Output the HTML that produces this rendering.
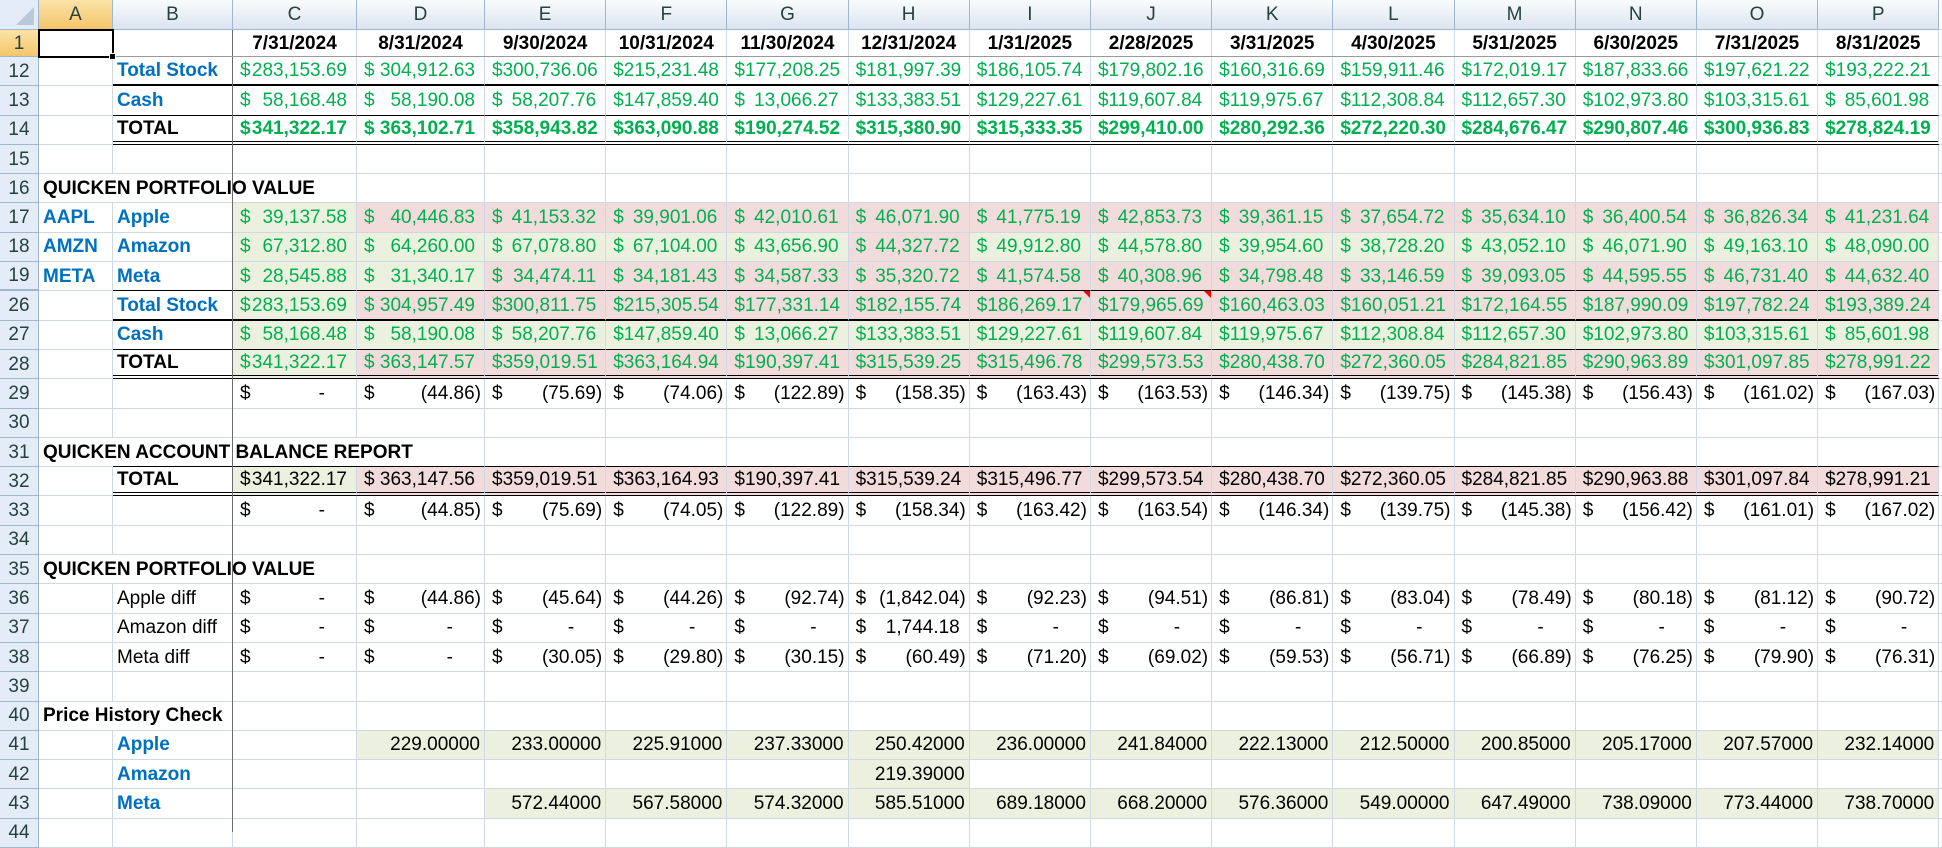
<!DOCTYPE html>
<html><head><meta charset="utf-8">
<style>
*{margin:0;padding:0;box-sizing:border-box}
body{width:1942px;height:832px;overflow:hidden;background:#fff;font-family:"Liberation Sans",Arial,sans-serif;font-size:19px;color:#000;position:relative}
.g0{display:grid;grid-template-columns:39px 74px 120px 124px 128px repeat(12,121.2px) 3px;grid-template-rows:30px 27px repeat(27,29.3px);width:1942px}
.g0>div{border-right:1px solid #d0d7e5;border-bottom:1px solid #d0d7e5;display:flex;align-items:center;white-space:nowrap;padding:0 4px;position:relative;line-height:1}
.g0>div.ch{background:linear-gradient(#f9fcfd,#dbe4f0);border-right:1px solid #9eb6ce;border-bottom:1px solid #9eb6ce;justify-content:center;color:#27413e;font-size:19px}
.g0>div.cs{background:linear-gradient(#fbe3a8,#f4c669);border-right:1px solid #9eb6ce;border-bottom:1px solid #9eb6ce;justify-content:center;color:#27413e}
.g0>div.h{background:#e4ecf7;border-right:1px solid #9eb6ce;border-bottom:1px solid #9eb6ce;justify-content:center;color:#27413e;padding:0}
.g0>div.hs{background:linear-gradient(#fbe3a8,#f4c669);border-right:1px solid #9eb6ce;border-bottom:1px solid #9eb6ce;justify-content:center;color:#27413e;padding:0}
.g0>div.h2{border-bottom:2px solid #9eb6ce}
.g0>div.m{justify-content:space-between;padding:0 3px 0 7px}
.g0>div.m span{padding-right:6px}
.g0>div.n span{padding-right:0}
.g0>div.d span{padding-right:28px}
.g0>div.r{justify-content:flex-end;padding-right:4px}
.g0>div.dt{justify-content:center;font-weight:bold}
.g{color:#00b050}.b{font-weight:bold}
.bl{color:#0070c0;font-weight:bold}
.fg{background:#ebf1de}.fp{background:#f2dcdb}
.g0>div.nr{border-right:none}
.g0>div.tk{border-bottom:2px solid #000}
.g0>div.tn{border-bottom:1px solid #000}
.g0>div.db{border-bottom:4px double #000}
.tri:after{content:"";position:absolute;right:0;top:0;border-top:7px solid #f00;border-left:7px solid transparent}
.vl{position:absolute;left:232px;top:30px;width:1px;height:802px;background:#6b6b6b}
.hl{position:absolute;left:39px;top:56px;width:1900px;height:1px;background:#9a9a9a}
.sel{position:absolute;left:38px;top:29px;width:76px;height:29px;border:2px solid #000}
.sel:after{content:"";position:absolute;right:-4px;bottom:-4px;width:5px;height:5px;background:#000;border:1px solid #fff}
.corner{position:absolute;left:0;top:0;width:39px;height:30px;background:#e4ecf7;border-right:1px solid #9eb6ce;border-bottom:1px solid #9eb6ce}
.corner:after{content:"";position:absolute;right:4px;bottom:4px;border-bottom:18px solid #b9c9da;border-left:18px solid transparent}
</style></head><body>
<div class="g0">
<div></div><div class="cs">A</div><div class="ch">B</div><div class="ch">C</div><div class="ch">D</div><div class="ch">E</div><div class="ch">F</div><div class="ch">G</div><div class="ch">H</div><div class="ch">I</div><div class="ch">J</div><div class="ch">K</div><div class="ch">L</div><div class="ch">M</div><div class="ch">N</div><div class="ch">O</div><div class="ch">P</div><div></div>

<div class="hs">1</div><div></div><div></div><div class="dt">7/31/2024</div><div class="dt">8/31/2024</div><div class="dt">9/30/2024</div><div class="dt">10/31/2024</div><div class="dt">11/30/2024</div><div class="dt">12/31/2024</div><div class="dt">1/31/2025</div><div class="dt">2/28/2025</div><div class="dt">3/31/2025</div><div class="dt">4/30/2025</div><div class="dt">5/31/2025</div><div class="dt">6/30/2025</div><div class="dt">7/31/2025</div><div class="dt">8/31/2025</div><div></div>

<div class="h">12</div><div></div><div class="bl tk">Total Stock</div><div class="m g tk">$<span>283,153.69</span></div><div class="m g tk">$<span>304,912.63</span></div><div class="m g tk">$<span>300,736.06</span></div><div class="m g tk">$<span>215,231.48</span></div><div class="m g tk">$<span>177,208.25</span></div><div class="m g tk">$<span>181,997.39</span></div><div class="m g tk">$<span>186,105.74</span></div><div class="m g tk">$<span>179,802.16</span></div><div class="m g tk">$<span>160,316.69</span></div><div class="m g tk">$<span>159,911.46</span></div><div class="m g tk">$<span>172,019.17</span></div><div class="m g tk">$<span>187,833.66</span></div><div class="m g tk">$<span>197,621.22</span></div><div class="m g tk">$<span>193,222.21</span></div><div></div>

<div class="h">13</div><div></div><div class="bl tn">Cash</div><div class="m g tn">$<span>58,168.48</span></div><div class="m g tn">$<span>58,190.08</span></div><div class="m g tn">$<span>58,207.76</span></div><div class="m g tn">$<span>147,859.40</span></div><div class="m g tn">$<span>13,066.27</span></div><div class="m g tn">$<span>133,383.51</span></div><div class="m g tn">$<span>129,227.61</span></div><div class="m g tn">$<span>119,607.84</span></div><div class="m g tn">$<span>119,975.67</span></div><div class="m g tn">$<span>112,308.84</span></div><div class="m g tn">$<span>112,657.30</span></div><div class="m g tn">$<span>102,973.80</span></div><div class="m g tn">$<span>103,315.61</span></div><div class="m g tn">$<span>85,601.98</span></div><div></div>

<div class="h">14</div><div></div><div class="b db">TOTAL</div><div class="m g b db">$<span>341,322.17</span></div><div class="m g b db">$<span>363,102.71</span></div><div class="m g b db">$<span>358,943.82</span></div><div class="m g b db">$<span>363,090.88</span></div><div class="m g b db">$<span>190,274.52</span></div><div class="m g b db">$<span>315,380.90</span></div><div class="m g b db">$<span>315,333.35</span></div><div class="m g b db">$<span>299,410.00</span></div><div class="m g b db">$<span>280,292.36</span></div><div class="m g b db">$<span>272,220.30</span></div><div class="m g b db">$<span>284,676.47</span></div><div class="m g b db">$<span>290,807.46</span></div><div class="m g b db">$<span>300,936.83</span></div><div class="m g b db">$<span>278,824.19</span></div><div></div>

<div class="h">15</div><div></div><div></div><div></div><div></div><div></div><div></div><div></div><div></div><div></div><div></div><div></div><div></div><div></div><div></div><div></div><div></div><div></div>

<div class="h">16</div><div class="b nr">QUICKEN PORTFOLIO VALUE</div><div class="nr"></div><div></div><div></div><div></div><div></div><div></div><div></div><div></div><div></div><div></div><div></div><div></div><div></div><div></div><div></div><div></div>

<div class="h">17</div><div class="bl">AAPL</div><div class="bl">Apple</div><div class="m g fg">$<span>39,137.58</span></div><div class="m g fp">$<span>40,446.83</span></div><div class="m g fp">$<span>41,153.32</span></div><div class="m g fp">$<span>39,901.06</span></div><div class="m g fp">$<span>42,010.61</span></div><div class="m g fp">$<span>46,071.90</span></div><div class="m g fp">$<span>41,775.19</span></div><div class="m g fp">$<span>42,853.73</span></div><div class="m g fp">$<span>39,361.15</span></div><div class="m g fp">$<span>37,654.72</span></div><div class="m g fp">$<span>35,634.10</span></div><div class="m g fp">$<span>36,400.54</span></div><div class="m g fp">$<span>36,826.34</span></div><div class="m g fp">$<span>41,231.64</span></div><div></div>

<div class="h">18</div><div class="bl">AMZN</div><div class="bl">Amazon</div><div class="m g fg">$<span>67,312.80</span></div><div class="m g fg">$<span>64,260.00</span></div><div class="m g fg">$<span>67,078.80</span></div><div class="m g fg">$<span>67,104.00</span></div><div class="m g fg">$<span>43,656.90</span></div><div class="m g fp">$<span>44,327.72</span></div><div class="m g fg">$<span>49,912.80</span></div><div class="m g fg">$<span>44,578.80</span></div><div class="m g fg">$<span>39,954.60</span></div><div class="m g fg">$<span>38,728.20</span></div><div class="m g fg">$<span>43,052.10</span></div><div class="m g fg">$<span>46,071.90</span></div><div class="m g fg">$<span>49,163.10</span></div><div class="m g fg">$<span>48,090.00</span></div><div></div>

<div class="h h2">19</div><div class="bl">META</div><div class="bl tn">Meta</div><div class="m g fg tn">$<span>28,545.88</span></div><div class="m g fg tn">$<span>31,340.17</span></div><div class="m g fp tn">$<span>34,474.11</span></div><div class="m g fp tn">$<span>34,181.43</span></div><div class="m g fp tn">$<span>34,587.33</span></div><div class="m g fp tn">$<span>35,320.72</span></div><div class="m g fp tn">$<span>41,574.58</span></div><div class="m g fp tn">$<span>40,308.96</span></div><div class="m g fp tn">$<span>34,798.48</span></div><div class="m g fp tn">$<span>33,146.59</span></div><div class="m g fp tn">$<span>39,093.05</span></div><div class="m g fp tn">$<span>44,595.55</span></div><div class="m g fp tn">$<span>46,731.40</span></div><div class="m g fp tn">$<span>44,632.40</span></div><div></div>

<div class="h">26</div><div></div><div class="bl tk">Total Stock</div><div class="m g fg tk">$<span>283,153.69</span></div><div class="m g fp tk">$<span>304,957.49</span></div><div class="m g fp tk">$<span>300,811.75</span></div><div class="m g fp tk">$<span>215,305.54</span></div><div class="m g fp tk">$<span>177,331.14</span></div><div class="m g fp tk">$<span>182,155.74</span></div><div class="m g fp tk tri">$<span>186,269.17</span></div><div class="m g fp tk tri">$<span>179,965.69</span></div><div class="m g fp tk">$<span>160,463.03</span></div><div class="m g fp tk">$<span>160,051.21</span></div><div class="m g fp tk">$<span>172,164.55</span></div><div class="m g fp tk">$<span>187,990.09</span></div><div class="m g fp tk">$<span>197,782.24</span></div><div class="m g fp tk">$<span>193,389.24</span></div><div></div>

<div class="h">27</div><div></div><div class="bl tn">Cash</div><div class="m g fg tn">$<span>58,168.48</span></div><div class="m g fg tn">$<span>58,190.08</span></div><div class="m g fg tn">$<span>58,207.76</span></div><div class="m g fg tn">$<span>147,859.40</span></div><div class="m g fg tn">$<span>13,066.27</span></div><div class="m g fg tn">$<span>133,383.51</span></div><div class="m g fg tn">$<span>129,227.61</span></div><div class="m g fg tn">$<span>119,607.84</span></div><div class="m g fg tn">$<span>119,975.67</span></div><div class="m g fg tn">$<span>112,308.84</span></div><div class="m g fg tn">$<span>112,657.30</span></div><div class="m g fg tn">$<span>102,973.80</span></div><div class="m g fg tn">$<span>103,315.61</span></div><div class="m g fg tn">$<span>85,601.98</span></div><div></div>

<div class="h">28</div><div></div><div class="b db">TOTAL</div><div class="m g fg db">$<span>341,322.17</span></div><div class="m g fp db">$<span>363,147.57</span></div><div class="m g fp db">$<span>359,019.51</span></div><div class="m g fp db">$<span>363,164.94</span></div><div class="m g fp db">$<span>190,397.41</span></div><div class="m g fp db">$<span>315,539.25</span></div><div class="m g fp db">$<span>315,496.78</span></div><div class="m g fp db">$<span>299,573.53</span></div><div class="m g fp db">$<span>280,438.70</span></div><div class="m g fp db">$<span>272,360.05</span></div><div class="m g fp db">$<span>284,821.85</span></div><div class="m g fp db">$<span>290,963.89</span></div><div class="m g fp db">$<span>301,097.85</span></div><div class="m g fp db">$<span>278,991.22</span></div><div></div>

<div class="h">29</div><div></div><div></div><div class="m d">$<span>-</span></div><div class="m n">$<span>(44.86)</span></div><div class="m n">$<span>(75.69)</span></div><div class="m n">$<span>(74.06)</span></div><div class="m n">$<span>(122.89)</span></div><div class="m n">$<span>(158.35)</span></div><div class="m n">$<span>(163.43)</span></div><div class="m n">$<span>(163.53)</span></div><div class="m n">$<span>(146.34)</span></div><div class="m n">$<span>(139.75)</span></div><div class="m n">$<span>(145.38)</span></div><div class="m n">$<span>(156.43)</span></div><div class="m n">$<span>(161.02)</span></div><div class="m n">$<span>(167.03)</span></div><div></div>

<div class="h">30</div><div></div><div></div><div></div><div></div><div></div><div></div><div></div><div></div><div></div><div></div><div></div><div></div><div></div><div></div><div></div><div></div><div></div>

<div class="h">31</div><div class="b nr">QUICKEN ACCOUNT BALANCE REPORT</div><div class="nr tn"></div><div class="nr tn"></div><div class="tn"></div><div class="tn"></div><div class="tn"></div><div class="tn"></div><div class="tn"></div><div class="tn"></div><div class="tn"></div><div class="tn"></div><div class="tn"></div><div class="tn"></div><div class="tn"></div><div class="tn"></div><div class="tn"></div><div></div>

<div class="h">32</div><div></div><div class="b db">TOTAL</div><div class="m fg db">$<span>341,322.17</span></div><div class="m fp db">$<span>363,147.56</span></div><div class="m fp db">$<span>359,019.51</span></div><div class="m fp db">$<span>363,164.93</span></div><div class="m fp db">$<span>190,397.41</span></div><div class="m fp db">$<span>315,539.24</span></div><div class="m fp db">$<span>315,496.77</span></div><div class="m fp db">$<span>299,573.54</span></div><div class="m fp db">$<span>280,438.70</span></div><div class="m fp db">$<span>272,360.05</span></div><div class="m fp db">$<span>284,821.85</span></div><div class="m fp db">$<span>290,963.88</span></div><div class="m fp db">$<span>301,097.84</span></div><div class="m fp db">$<span>278,991.21</span></div><div></div>

<div class="h">33</div><div></div><div></div><div class="m d">$<span>-</span></div><div class="m n">$<span>(44.85)</span></div><div class="m n">$<span>(75.69)</span></div><div class="m n">$<span>(74.05)</span></div><div class="m n">$<span>(122.89)</span></div><div class="m n">$<span>(158.34)</span></div><div class="m n">$<span>(163.42)</span></div><div class="m n">$<span>(163.54)</span></div><div class="m n">$<span>(146.34)</span></div><div class="m n">$<span>(139.75)</span></div><div class="m n">$<span>(145.38)</span></div><div class="m n">$<span>(156.42)</span></div><div class="m n">$<span>(161.01)</span></div><div class="m n">$<span>(167.02)</span></div><div></div>

<div class="h">34</div><div></div><div></div><div></div><div></div><div></div><div></div><div></div><div></div><div></div><div></div><div></div><div></div><div></div><div></div><div></div><div></div><div></div>

<div class="h">35</div><div class="b nr">QUICKEN PORTFOLIO VALUE</div><div class="nr"></div><div></div><div></div><div></div><div></div><div></div><div></div><div></div><div></div><div></div><div></div><div></div><div></div><div></div><div></div><div></div>

<div class="h">36</div><div></div><div>Apple diff</div><div class="m d">$<span>-</span></div><div class="m n">$<span>(44.86)</span></div><div class="m n">$<span>(45.64)</span></div><div class="m n">$<span>(44.26)</span></div><div class="m n">$<span>(92.74)</span></div><div class="m n">$<span>(1,842.04)</span></div><div class="m n">$<span>(92.23)</span></div><div class="m n">$<span>(94.51)</span></div><div class="m n">$<span>(86.81)</span></div><div class="m n">$<span>(83.04)</span></div><div class="m n">$<span>(78.49)</span></div><div class="m n">$<span>(80.18)</span></div><div class="m n">$<span>(81.12)</span></div><div class="m n">$<span>(90.72)</span></div><div></div>

<div class="h">37</div><div></div><div>Amazon diff</div><div class="m d">$<span>-</span></div><div class="m d">$<span>-</span></div><div class="m d">$<span>-</span></div><div class="m d">$<span>-</span></div><div class="m d">$<span>-</span></div><div class="m">$<span>1,744.18</span></div><div class="m d">$<span>-</span></div><div class="m d">$<span>-</span></div><div class="m d">$<span>-</span></div><div class="m d">$<span>-</span></div><div class="m d">$<span>-</span></div><div class="m d">$<span>-</span></div><div class="m d">$<span>-</span></div><div class="m d">$<span>-</span></div><div></div>

<div class="h">38</div><div></div><div>Meta diff</div><div class="m d">$<span>-</span></div><div class="m d">$<span>-</span></div><div class="m n">$<span>(30.05)</span></div><div class="m n">$<span>(29.80)</span></div><div class="m n">$<span>(30.15)</span></div><div class="m n">$<span>(60.49)</span></div><div class="m n">$<span>(71.20)</span></div><div class="m n">$<span>(69.02)</span></div><div class="m n">$<span>(59.53)</span></div><div class="m n">$<span>(56.71)</span></div><div class="m n">$<span>(66.89)</span></div><div class="m n">$<span>(76.25)</span></div><div class="m n">$<span>(79.90)</span></div><div class="m n">$<span>(76.31)</span></div><div></div>

<div class="h">39</div><div></div><div></div><div></div><div></div><div></div><div></div><div></div><div></div><div></div><div></div><div></div><div></div><div></div><div></div><div></div><div></div><div></div>

<div class="h">40</div><div class="b nr">Price History Check</div><div></div><div></div><div></div><div></div><div></div><div></div><div></div><div></div><div></div><div></div><div></div><div></div><div></div><div></div><div></div><div></div>

<div class="h">41</div><div></div><div class="bl">Apple</div><div></div><div class="r fg">229.00000</div><div class="r fg">233.00000</div><div class="r fg">225.91000</div><div class="r fg">237.33000</div><div class="r fg">250.42000</div><div class="r fg">236.00000</div><div class="r fg">241.84000</div><div class="r fg">222.13000</div><div class="r fg">212.50000</div><div class="r fg">200.85000</div><div class="r fg">205.17000</div><div class="r fg">207.57000</div><div class="r fg">232.14000</div><div></div>

<div class="h">42</div><div></div><div class="bl">Amazon</div><div></div><div></div><div></div><div></div><div></div><div class="r fg">219.39000</div><div></div><div></div><div></div><div></div><div></div><div></div><div></div><div></div><div></div>

<div class="h">43</div><div></div><div class="bl">Meta</div><div></div><div></div><div class="r fg">572.44000</div><div class="r fg">567.58000</div><div class="r fg">574.32000</div><div class="r fg">585.51000</div><div class="r fg">689.18000</div><div class="r fg">668.20000</div><div class="r fg">576.36000</div><div class="r fg">549.00000</div><div class="r fg">647.49000</div><div class="r fg">738.09000</div><div class="r fg">773.44000</div><div class="r fg">738.70000</div><div></div>

<div class="h">44</div><div></div><div></div><div></div><div></div><div></div><div></div><div></div><div></div><div></div><div></div><div></div><div></div><div></div><div></div><div></div><div></div><div></div>
</div>
<div class="corner"></div>
<div class="vl"></div>
<div class="hl"></div>
<div class="sel"></div>
</body></html>
